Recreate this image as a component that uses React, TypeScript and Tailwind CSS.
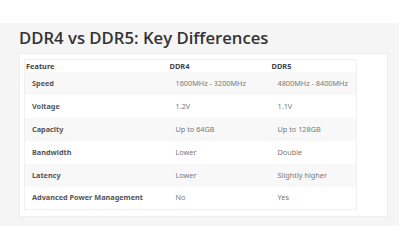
export default function App() {
  const rows = [
    ["Speed", "1600MHz - 3200MHz", "4800MHz - 8400MHz"],
    ["Voltage", "1.2V", "1.1V"],
    ["Capacity", "Up to 64GB", "Up to 128GB"],
    ["Bandwidth", "Lower", "Double"],
    ["Latency", "Lower", "Slightly higher"],
    ["Advanced Power Management", "No", "Yes"],
  ];
  return (
    <div className="w-[400px] h-[250px] bg-white pt-[23px]">
      <div className="w-[399px] h-[203px] bg-[#f5f5f5] pl-[19px] pt-[3px]">
        <h2
          className="text-[16.7px] leading-[24px] font-semibold text-[#333] m-0"
          style={{ fontFamily: '"Open Sans", "Noto Sans", sans-serif' }}
        >
          DDR4 vs DDR5: Key Differences
        </h2>
        <div className="mt-[3px] w-[369px] h-[164px] bg-white border border-[#eeeeee] pl-[4px] pt-[5px]">
          <table
            className="w-[332px] border-collapse border border-[#f0f0f0] table-fixed"
            style={{ fontFamily: '"Noto Sans", "Open Sans", sans-serif' }}
          >
            <colgroup>
              <col className="w-[145px]" />
              <col className="w-[102px]" />
              <col className="w-[85px]" />
            </colgroup>
            <thead>
              <tr className="h-[12px]">
                <th className="text-left text-[7.4px] leading-[10px] font-bold text-[#444] pl-[1px] p-0">Feature</th>
                <th className="text-left text-[7.4px] leading-[10px] font-bold text-[#444] p-0">DDR4</th>
                <th className="text-left text-[7.4px] leading-[10px] font-bold text-[#444] p-0">DDR5</th>
              </tr>
            </thead>
            <tbody>
              {rows.map((r, i) => (
                <tr key={r[0]} className={`h-[23px] ${i % 2 === 0 ? "bg-[#f8f8f8]" : "bg-white"}`}>
                  <td className="pl-[7px] text-[7.3px] font-bold text-[#555] whitespace-nowrap">{r[0]}</td>
                  <td className="pl-[6px] text-[7.3px] text-[#777] whitespace-nowrap">{r[1]}</td>
                  <td className="pl-[6px] text-[7.3px] text-[#777] whitespace-nowrap">{r[2]}</td>
                </tr>
              ))}
            </tbody>
          </table>
        </div>
      </div>
    </div>
  );
}
